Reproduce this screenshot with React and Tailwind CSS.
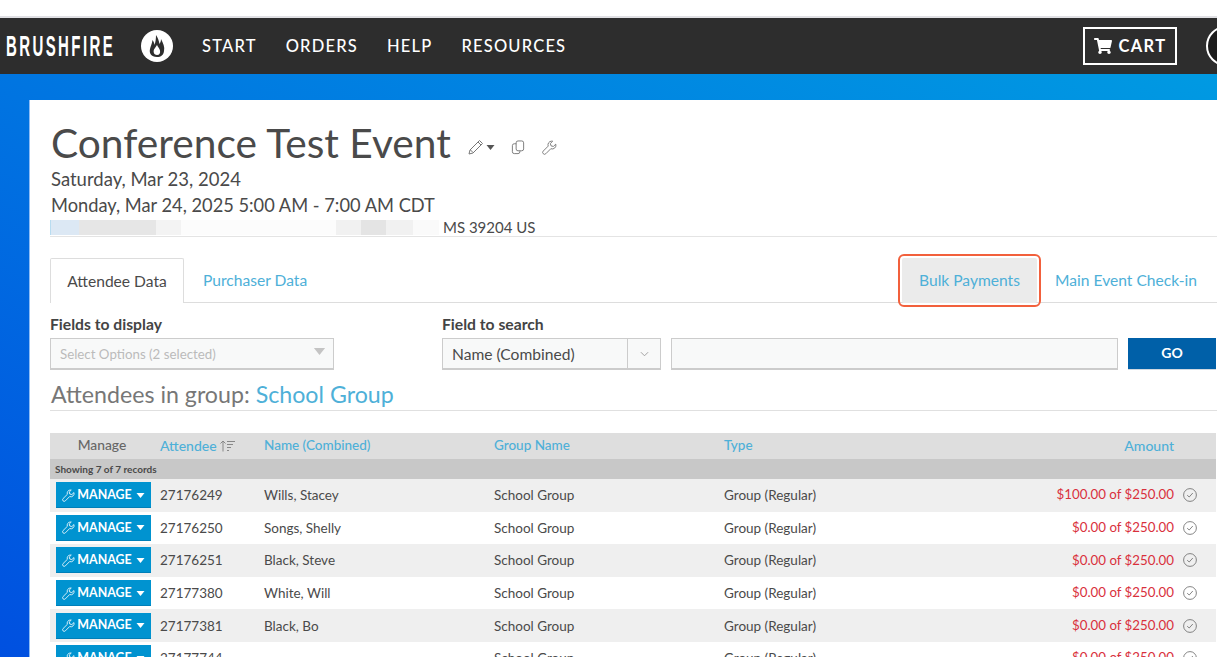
import { FaShoppingCart } from "react-icons/fa";

const rows = [
  { id: "27176249", name: "Wills, Stacey", group: "School Group", amount: "$100.00 of $250.00" },
  { id: "27176250", name: "Songs, Shelly", group: "School Group", amount: "$0.00 of $250.00" },
  { id: "27176251", name: "Black, Steve", group: "School Group", amount: "$0.00 of $250.00" },
  { id: "27177380", name: "White, Will", group: "School Group", amount: "$0.00 of $250.00" },
  { id: "27177381", name: "Black, Bo", group: "School Group", amount: "$0.00 of $250.00" },
  { id: "27177744", name: "", group: "School Group", amount: "$0.00 of $250.00" },
];

const columns = "grid grid-cols-[110px_104px_230px_230px_1fr_220px_42px] items-center";

const Wrench = ({ className }) => (
  <svg viewBox="0 0 16 16" fill="none" stroke="currentColor" strokeWidth="1" strokeLinejoin="round" className={className}>
    <path d="M10.200 1.200a4 4 0 0 0-3.600 5.300L1.300 11.800a1.900 1.900 0 0 0 2.800 2.800l5.300-5.300a4 4 0 0 0 5.300-4.900l-2.600 2.500-2.500-.7-.7-2.500 2.500-2.400a4 4 0 0 0-1.200-.1z" />
  </svg>
);

const Caret = ({ className }) => (
  <svg viewBox="0 0 8 5" fill="currentColor" className={className}>
    <path d="M0 0h8L4 5z" />
  </svg>
);

const Check = () => (
  <svg viewBox="0 0 14 14" fill="none" stroke="#666" strokeWidth="0.8" className="w-[14px] h-[14px]">
    <circle cx="7" cy="7" r="6.400" />
    <path d="M4.200 7.200l2 1.800 3.600-4" />
  </svg>
);

const Header = () => (
  <div className="h-[56px] bg-[#2d2d2d] flex items-center text-white font-['Lato',sans-serif] overflow-hidden shrink-0">
    <div className="w-[112px] ml-[6px] h-[30px] shrink-0">
      <span className="block origin-left scale-x-[0.5] whitespace-nowrap text-[30px] leading-[30px] tracking-[4.800px] font-bold font-['Liberation_Sans',sans-serif]">BRUSHFIRE</span>
    </div>
    <div className="w-[32px] h-[32px] rounded-full bg-white ml-[23px] mr-[29px] shrink-0 flex items-center justify-center">
      <svg viewBox="0 0 20 24" className="w-[20px] h-[24px]">
        <path fill="#2d2d2d" d="M10 23C4 23 2 19 3 15C3.500 12 5 10 5.500 6C7 8 7.500 10 7.500 11C8.500 8 9 5 9 1C11 4 12 7 12.500 10C13.500 8.500 14 7 14 5C16 9 18 13 17 17C16.500 21 14 23 10 23z" />
        <path fill="#fff" d="M10 21C7 21 6 18 7 15.500C8 14 9 12.500 10 11C11 13 12.500 14.500 13 16.500C13.500 19 12.500 21 10 21z" />
      </svg>
    </div>
    <nav className="flex gap-[29px] text-[16.500px] font-medium tracking-[1.200px]">
      <span>START</span>
      <span>ORDERS</span>
      <span>HELP</span>
      <span>RESOURCES</span>
    </nav>
    <div className="ml-auto flex items-center shrink-0">
      <div className="w-[94px] h-[38px] border-2 border-white flex items-center justify-center gap-[7px] text-[16.500px] tracking-[1.300px] font-bold">
        <FaShoppingCart className="w-[18px] h-[16px]" />
        <span>CART</span>
      </div>
      <div className="w-[40px] h-[40px] rounded-full border-2 border-white bg-[#1c1c1c] ml-[29px] -mr-[29px] shrink-0" />
    </div>
  </div>
);

const EventInfo = () => (
  <div className="border-b border-[#e4e4e4] h-[137px] pt-[20px] overflow-hidden">
    <div className="flex items-center h-[46px]">
      <h1 className="text-[40.700px] leading-[46px] text-[#4a4a4a] pl-[1px]">Conference Test Event</h1>
      <div className="flex items-center ml-[17px] mt-[8px] text-[#777]">
        <svg viewBox="0 0 16 16" fill="none" stroke="currentColor" strokeWidth="1" className="w-[16px] h-[16px]">
          <path d="M11.500 1.500l3 3-9.500 9.500-4 1 1-4z M10 3l3 3 M2.500 11l2.500 2.500" />
        </svg>
        <Caret className="w-[9px] h-[5px] ml-[2px] text-[#555]" />
        <svg viewBox="0 0 14 16" fill="none" stroke="currentColor" strokeWidth="1" className="w-[14px] h-[15px] ml-[16px]">
          <rect x="5" y="1" width="8" height="10.500" rx="2" />
          <path d="M5 4H3a2 2 0 0 0-2 2v6.500a2 2 0 0 0 2 2h4a2 2 0 0 0 2-2v-1" />
        </svg>
        <Wrench className="w-[15px] h-[15px] ml-[17px]" />
      </div>
    </div>
    <p className="text-[18.500px] leading-[25px] text-[#4a4a4a] pt-[1px] pl-[1px]">Saturday, Mar 23, 2024</p>
    <p className="text-[18.250px] leading-[26px] text-[#4a4a4a] pl-[1px]">Monday, Mar 24, 2025 5:00 AM - 7:00 AM CDT</p>
    <div className="flex items-center h-[17px] mt-[1px]">
      <div className="w-[389px] h-[15px] flex shrink-0">
        <div className="w-[29px] bg-[#dce8f4] border-l border-[#b8dcf0]" />
        <div className="w-[77px] bg-[#e6e6e6]" />
        <div className="w-[25px] bg-[#f3f3f3]" />
        <div className="w-[155px] bg-[#fcfcfc]" />
        <div className="w-[25px] bg-[#f1f1f1]" />
        <div className="w-[25px] bg-[#e4e4e4]" />
        <div className="w-[27px] bg-[#f1f1f1]" />
        <div className="w-[26px] bg-[#fafafa]" />
      </div>
      <span className="ml-[4px] text-[15px] leading-[17px] text-[#4a4a4a]">MS 39204 US</span>
    </div>
  </div>
);

const Tabs = () => (
  <div className="relative h-[45px] mt-[21px] border-b border-[#ddd] flex text-[15.600px]">
    <div className="w-[134px] h-[45px] pt-[1px] border border-b-0 border-[#ddd] bg-white flex items-center justify-center text-[#4a4a4a] rounded-t-[2px] relative z-10">
      Attendee Data
    </div>
    <div className="ml-[19px] pt-[2px] flex items-center text-[#4eb0d8]">Purchaser Data</div>
    <div className="ml-auto pt-[2px] flex items-center mr-[20px] text-[#4eb0d8]">
      <div className="absolute right-[176px] -top-[4px] w-[143px] h-[53px] border-2 border-[#f2603c] rounded-[6px] p-[2px]">
        <div className="w-full h-full pt-[1px] bg-[#ebebeb] rounded-[2px] flex items-center justify-center">Bulk Payments</div>
      </div>
      <span>Main Event Check-in</span>
    </div>
  </div>
);

const Filters = () => (
  <div className="flex mt-[12px]">
    <div className="w-[392px] shrink-0">
      <label className="block text-[15.700px] leading-[18px] font-bold text-[#444]">Fields to display</label>
      <div className="w-[284px] h-[32px] mt-[5px] border border-[#ccc] border-b-2 bg-[#f8f9f9] flex items-center justify-between pl-[9px] pr-[7px]">
        <span className="text-[13.300px] text-[#bbb] pt-[2px]">Select Options (2 selected)</span>
        <Caret className="w-[13px] h-[7px] text-[#c4c4c4] -mt-[4px]" />
      </div>
    </div>
    <div className="flex-1">
      <label className="block text-[15.700px] leading-[18px] font-bold text-[#444]">Field to search</label>
      <div className="flex mt-[5px] h-[32px]">
        <div className="w-[219px] border border-[#ccc] border-b-2 bg-[#f8f9f9] flex items-center">
          <span className="flex-1 pl-[9px] pt-[2px] text-[15.600px] text-[#4a4a4a]">Name (Combined)</span>
          <div className="w-[33px] h-full border-l border-[#ccc] flex items-center justify-center">
            <svg viewBox="0 0 10 6" fill="none" stroke="#999" strokeWidth="1" className="w-[9px] h-[6px]">
              <path d="M1 1l4 4 4-4" />
            </svg>
          </div>
        </div>
        <div className="w-[447px] ml-[10px] border border-[#ccc] border-b-2 bg-[#f8f9f9]" />
        <button className="w-[88px] ml-[10px] bg-[#0060a8] border-b border-[#d0d8e0] text-white text-[14px] font-bold pb-[2px]">GO</button>
      </div>
    </div>
  </div>
);

const Table = () => (
  <div className="mt-[22px] mr-[1px] text-[13.500px] text-[#4a4a4a]">
    <div className={`${columns} h-[26px] pb-[1px] bg-[#dedede] font-medium text-[#4eb0d8]`}>
      <span className="text-center text-[#666] pr-[6px] text-[13.800px]">Manage</span>
      <span className="flex items-center gap-[2px] text-[14px]">
        Attendee
        <svg viewBox="0 0 16 12" fill="none" stroke="#888" strokeWidth="1" className="w-[16px] h-[12px]">
          <path d="M4 11.500V1M1.500 3.500L4 1l2.500 2.500M8 1.500h8M8 4.500h6M8 7.500h4M8 10.500h2" />
        </svg>
      </span>
      <span>Name (Combined)</span>
      <span>Group Name</span>
      <span>Type</span>
      <span className="text-right text-[14px]">Amount</span>
      <span />
    </div>
    <div className="h-[20px] bg-[#c8c8c8] flex items-center pl-[5px] text-[10px] font-bold text-[#4a4a4a]">Showing 7 of 7 records</div>
    {rows.map((row, i) => (
      <div key={row.id} className={`${columns} h-[32.600px] ${i % 2 === 0 ? "bg-[#efefef]" : "bg-white"}`}>
        <div className="pl-[6px]">
          <button className="w-[95px] h-[26px] pt-[1px] bg-[#0093d0] border-b border-[#007fb8] text-white text-[12.400px] font-bold flex items-center justify-center gap-[2px]">
            <Wrench className="w-[13px] h-[13px]" />
            MANAGE
            <Caret className="w-[9px] h-[5px] ml-[2px]" />
          </button>
        </div>
        <span>{row.id}</span>
        <span>{row.name}</span>
        <span>{row.group}</span>
        <span>Group (Regular)</span>
        <span className="text-right text-[13.300px] text-[#d9303c]">{row.amount}</span>
        <div className="pl-[9px] flex items-center"><Check /></div>
      </div>
    ))}
  </div>
);

const App = () => {
  return (
    <div className="w-[1217px] h-[657px] overflow-hidden bg-white font-['Lato',sans-serif] flex flex-col">
      <div className="h-[16px] bg-white shrink-0" />
      <div className="h-[2px] bg-[#e0e0e4] shrink-0" />
      <Header />
      <div className="flex-1 bg-[linear-gradient(to_top_right,#0050e0,#009ae2)] pt-[26px] pl-[29px] overflow-hidden">
        <div className="bg-white h-full pl-[20px] border-l border-[#8dbcf5] relative">
          <EventInfo />
          <Tabs />
          <Filters />
          <div className="h-[33px] mt-[8px] pl-[1px] border-b border-[#e0e0e0] flex items-center text-[23.200px] text-[#777]">
            Attendees in group:&nbsp;<span className="text-[#4eb0d8]">School Group</span>
          </div>
          <Table />
        </div>
      </div>
    </div>
  );
};

export default App;
